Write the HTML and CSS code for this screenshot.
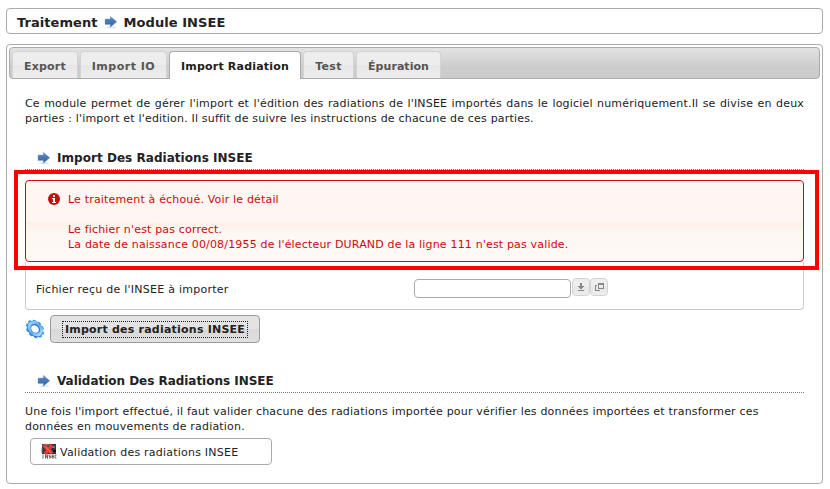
FILE: index.html
```html
<!DOCTYPE html>
<html lang="fr">
<head>
<meta charset="utf-8">
<title>Module INSEE</title>
<link rel="stylesheet" href="styles.css">
</head>
<body>
<svg width="0" height="0" class="defs" aria-hidden="true">
  <defs>
    <linearGradient id="blue" x1="0" y1="0" x2="0" y2="1"><stop offset="0" stop-color="#5c8cc6"/><stop offset="1" stop-color="#33619f"/></linearGradient>
    <linearGradient id="gear" x1="0" y1="0" x2="1" y2="0"><stop offset="0" stop-color="#8fcdfb"/><stop offset=".5" stop-color="#5aa9f0"/><stop offset="1" stop-color="#9ad6ff"/></linearGradient>
    <symbol id="arrow" viewBox="0 0 14 14">
      <ellipse cx="7" cy="12.3" rx="5" ry="1" fill="#e4e4e4"/>
      <path d="M1 4H6.3V1.2L12.8 6.8L6.3 12.3V9.6H1Z" fill="url(#blue)" stroke="#7fa2d0" stroke-width=".4"/>
    </symbol>
  </defs>
</svg>
<header class="title">
  <span>Traitement</span>
  <svg class="arrow" width="14" height="14"><use href="#arrow"/></svg>
  <span>Module INSEE</span>
</header>
<main class="panel">
  <nav class="tabs">
    <a class="tab export">Export</a>
    <a class="tab io">Import IO</a>
    <a class="tab active">Import Radiation</a>
    <a class="tab test">Test</a>
    <a class="tab epuration">Épuration</a>
  </nav>
  <section class="content">
    <p class="intro">Ce module permet de gérer l'import et l'édition des radiations de l'INSEE importés dans le logiciel numériquement.Il se divise en deux parties : l'import et l'edition. Il suffit de suivre les instructions de chacune de ces parties.</p>
    <h2 class="first"><svg class="arrow" width="14" height="14"><use href="#arrow"/></svg><span>Import Des Radiations INSEE</span></h2>
    <div class="alert">
      <svg class="info" width="12" height="12" viewBox="0 0 12 12"><circle cx="6" cy="6" r="6" fill="#cd0a0a"/><path d="M5 2h2v2H5zM5 5h2v4h1v1H5V9zM4 5h1v1H4zM4 9h1v1H4z" fill="#fff"/></svg>
      <div class="message">
        <p>Le traitement à échoué. Voir le détail</p>
        <p class="detail">Le fichier n'est pas correct.</p>
        <p class="line">La date de naissance 00/08/1955 de l'électeur DURAND de la ligne 111 n'est pas valide.</p>
      </div>
      <div class="highlight"></div>
    </div>
    <form class="fieldset">
      <label for="file">Fichier reçu de l'INSEE à importer</label>
      <input id="file" type="text">
      <span class="tool"><svg width="16" height="16" viewBox="0 0 16 16"><path d="M7 4h2v3h2v1h-1v1H9v1H7V9H6V8H5V7h2zM5 11h6v1H5z" fill="#888"/></svg></span>
      <span class="tool"><svg width="16" height="16" viewBox="0 0 16 16"><path d="M7 4h6v6H7zM8 6v3h4V6zM4 6h2v1H5v4h4v1H4z" fill="#888" fill-rule="evenodd"/></svg></span>
    </form>
    <div class="actions">
      <svg class="gear" width="20" height="20" viewBox="0 0 20 20">
        <g transform="rotate(45 10 10) translate(-.5 1.8) scale(1.05 .82)">
          <circle cx="10" cy="10" r="8.6" fill="none" stroke="#4a9aea" stroke-width="2.4" stroke-dasharray="3.2 2.204"/>
          <circle cx="10" cy="10" r="6.4" fill="none" stroke="#2672cc" stroke-width="4.6"/>
        </g>
        <g transform="rotate(45 10 10) translate(-.5 1.3) scale(1.05 .82)">
          <circle cx="10" cy="10" r="6.6" fill="none" stroke="url(#gear)" stroke-width="3.2"/>
        </g>
      </svg>
      <button type="button" class="submit"><span>Import des radiations INSEE</span></button>
    </div>
    <h2 class="second"><svg class="arrow" width="14" height="14"><use href="#arrow"/></svg><span>Validation Des Radiations INSEE</span></h2>
    <p class="outro">Une fois l'import effectué, il faut valider chacune des radiations importée pour vérifier les données importées et transformer ces<br>données en mouvements de radiation.</p>
    <a class="validate">
      <svg width="16" height="16" viewBox="0 0 16 16">
        <path d="M1 1h14v10H1z" fill="#34343c"/><path d="M1 3l3-2 2 1 3-1M1 5v5M3 2h5" stroke="#877" fill="none"/>
        <path d="M11 3h3v2h-3z" fill="#777"/><path d="M12 7h3v2h-3z" fill="#111"/>
        <path d="M3 2.5L11 10.5M11 2L4 11" stroke="#ee3a30" stroke-width="3.4"/><path d="M4 3.5L10 9.5" stroke="#ff7367"/>
        <path d="M2 11.5v4M4.5 15.5v-4l2 4v-4M9.5 12H8v1.5h1.5V15H8M13 12h-2v3h2M11 13.5h2M15.5 12H14v3h1.5" stroke="#444" fill="none" stroke-width=".8"/>
      </svg>
      <span>Validation des radiations INSEE</span>
    </a>
  </section>
</main>
</body>
</html>
```
FILE: styles.css
```css
* { box-sizing: border-box; }
body {
  margin: 0;
  padding: 8px 7px 0 6px;
  height: 489px;
  overflow: hidden;
  background: #fff;
  color: #222;
  font: 11px/15px "DejaVu Sans", sans-serif;
  letter-spacing: .19px;
}
.defs { display: block; position: absolute; }
svg { display: block; flex: none; }
p { margin: 0; white-space: nowrap; }
.title {
  display: flex;
  align-items: center;
  height: 26px;
  padding: 2px 0 0 10px;
  border: 1px solid #aaa;
  border-radius: 4px;
  font-weight: bold;
  font-size: 13px;
  letter-spacing: .06px;
}
.title .arrow { margin: -1px 6px 0 6px; }
.panel {
  height: 440px;
  margin-top: 10px;
  padding: 2px;
  border: 1px solid #aaa;
  border-radius: 4px;
}
.tabs {
  display: flex;
  align-items: flex-end;
  gap: 2px;
  height: 32px;
  padding-left: 2px;
  border: 1px solid #aaa;
  border-radius: 4px;
  background: linear-gradient(#e3e3e3, #ccc 65%, #ccc);
}
.tab {
  height: 27px;
  padding-top: 7px;
  border: 1px solid #d3d3d3;
  border-bottom: 0;
  border-radius: 4px 4px 0 0;
  background: linear-gradient(#ededed 50%, #e6e6e6 51%, #eee);
  color: #555;
  font-weight: bold;
  text-align: center;
  white-space: nowrap;
}
.export { width: 66px; }
.io { width: 87px; letter-spacing: .5px; }
.active { width: 132px; height: 28px; margin-bottom: -1px; border-color: #aaa; background: #fff; color: #212121; }
.test { width: 51px; letter-spacing: .35px; }
.epuration { width: 85px; letter-spacing: .05px; }
.content { padding: 17px 16px 0; }
.intro { text-align: justify; white-space: normal; }
h2 {
  display: flex;
  align-items: center;
  height: 25px;
  margin: 0;
  padding: 1px 0 0 12px;
  border-bottom: 1px dotted #777;
  font-size: 12px;
  font-weight: bold;
  white-space: nowrap;
}
h2 span { padding-top: 2px; }
h2 .arrow { margin-right: 6px; }
h2.first { margin-top: 19px; letter-spacing: .04px; }
h2.second { margin-top: 25px; letter-spacing: -.03px; }
.alert {
  position: relative;
  display: flex;
  height: 82px;
  margin-top: 10px;
  padding: 11px 0 0 22px;
  border: 1px solid #cd0a0a;
  border-radius: 4px;
  background: linear-gradient(#fff5f2 0 40px, #feefe9 41px, #fef8f5 53px, #fff9f6);
  color: #cd0a0a;
  letter-spacing: .17px;
}
.info { margin: 1px 8px 0 0; }
.detail { margin-top: 15px; }
.highlight {
  position: absolute;
  inset: -11px -16px -9px -12px;
  border: 4px solid #f00;
}
.fieldset {
  display: flex;
  height: 48px;
  padding: 16px 0 0 10px;
  border: 1px solid #ccc;
  border-top: 0;
  border-radius: 0 0 4px 4px;
}
.fieldset label { width: 378px; padding-top: 4px; letter-spacing: .25px; }
.fieldset input {
  width: 157px;
  height: 19px;
  margin: 1px 1px 0 0;
  border: 1px solid #aaa;
  border-radius: 4px;
  background: #fff;
}
.tool {
  width: 18px;
  height: 18px;
  border: 1px solid #d3d3d3;
  border-radius: 4px;
  background: linear-gradient(#eee 50%, #e6e6e6 51%, #eee);
}
.actions { display: flex; margin-top: 5px; }
.gear { margin: 4px 5px 0 0; }
.submit {
  width: 210px;
  height: 28px;
  padding: 0;
  border: 1px solid #999;
  border-radius: 4px;
  background: linear-gradient(#e3e3e3 50%, #d9d9d9 51%, #dfdfdf);
  color: #212121;
  font: bold 11px/15px "DejaVu Sans", sans-serif;
  letter-spacing: .22px;
}
.submit span { display: block; width: 186px; height: 17px; margin: 0 auto; border: 1px dotted #222; }
.outro { margin-top: 11px; }
.validate {
  display: flex;
  width: 242px;
  height: 27px;
  margin: 4px 0 0 5px;
  padding: 4px 0 0 10px;
  border: 1px solid #aaa;
  border-radius: 4px;
  letter-spacing: .22px;
}
.validate span { margin: 2px 0 0 3px; }
```
